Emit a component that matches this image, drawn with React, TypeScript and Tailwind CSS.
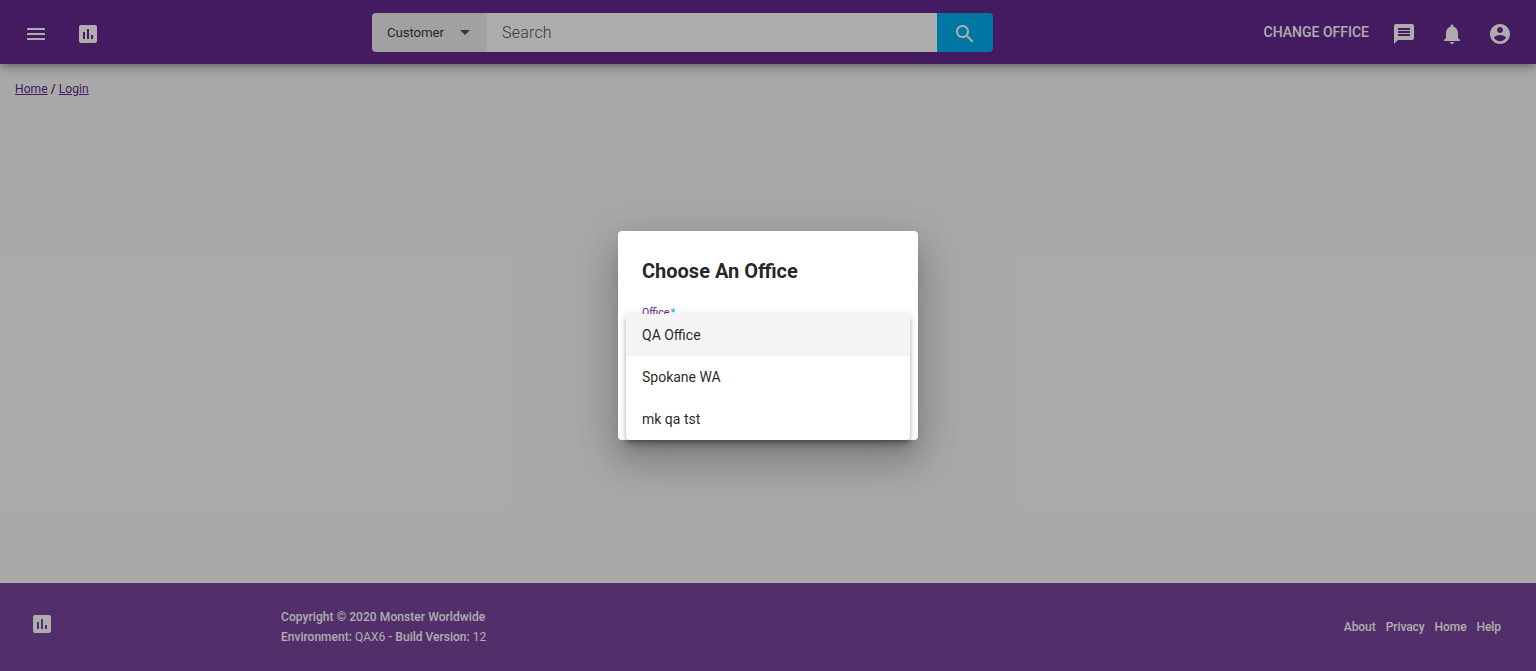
import React from 'react';

const icons = {
  menu: 'M3 18h18v-2H3v2zm0-5h18v-2H3v2zm0-7v2h18V6H3z',
  chart:
    'M19 3H5c-1.1 0-2 .9-2 2v14c0 1.1.9 2 2 2h14c1.1 0 2-.9 2-2V5c0-1.1-.9-2-2-2zM9 17H7v-7h2v7zm4 0h-2V7h2v10zm4 0h-2v-4h2v4z',
  search:
    'M15.5 14h-.79l-.28-.27C15.41 12.59 16 11.11 16 9.5 16 5.91 13.09 3 9.5 3S3 5.91 3 9.5 5.91 16 9.5 16c1.61 0 3.09-.59 4.23-1.57l.27.28v.79l5 4.99L20.49 19l-4.99-5zm-6 0C7.01 14 5 11.99 5 9.5S7.01 5 9.5 5 14 7.01 14 9.5 11.99 14 9.5 14z',
  message:
    'M20 2H4c-1.1 0-1.99.9-1.99 2L2 22l4-4h14c1.1 0 2-.9 2-2V4c0-1.1-.9-2-2-2zm-2 12H6v-2h12v2zm0-3H6V9h12v2zm0-3H6V6h12v2z',
  bell: 'M12 22c1.1 0 2-.9 2-2h-4c0 1.1.89 2 2 2zm6-6v-5c0-3.07-1.64-5.64-4.5-6.32V4c0-.83-.67-1.5-1.5-1.5s-1.5.67-1.5 1.5v.68C7.63 5.36 6 7.92 6 11v5l-2 2v1h16v-1l-2-2z',
  account:
    'M12 2C6.48 2 2 6.48 2 12s4.48 10 10 10 10-4.48 10-10S17.52 2 12 2zm0 3c1.66 0 3 1.34 3 3s-1.34 3-3 3-3-1.34-3-3 1.34-3 3-3zm0 14.2c-2.5 0-4.71-1.28-6-3.22.03-1.99 4-3.08 6-3.08 1.99 0 5.97 1.09 6 3.08-1.29 1.94-3.5 3.22-6 3.22z',
};

function Icon({ name, className = '' }: { name: keyof typeof icons; className?: string }) {
  return (
    <svg viewBox="0 0 24 24" className={`size-6 shrink-0 fill-current ${className}`} aria-hidden="true">
      <path d={icons[name]} />
    </svg>
  );
}

function Header() {
  return (
    <header className="grid h-16 shrink-0 grid-cols-[372px_621px_1fr] items-center bg-[#65288f] text-white shadow-[0_3px_5px_-1px_rgba(0,0,0,0.2),0_6px_10px_0_rgba(0,0,0,0.14),0_1px_18px_0_rgba(0,0,0,0.12)]">
      <div className="flex items-center gap-7 pt-1 pl-6">
        <Icon name="menu" />
        <Icon name="chart" />
      </div>
      <div className="mt-px flex h-[39px] overflow-hidden rounded">
        <div className="flex w-[115px] items-center justify-between bg-[#eeeeee] pr-4 pl-[15px] text-[13.33px] tracking-[-0.15px] text-black/80">
          <span>Customer</span>
          <svg viewBox="0 0 10 5" className="mr-px h-[5px] w-[10px] fill-black/65">
            <path d="M0 0h10L5 5z" />
          </svg>
        </div>
        <div className="flex flex-1 items-center bg-white pl-[15px] text-base font-light tracking-[0.2px] text-[#555]">
          Search
        </div>
        <button className="flex w-14 items-center justify-center bg-[#00afef]">
          <Icon name="search" className="mt-0.5" />
        </button>
      </div>
      <div className="flex items-center justify-end gap-6 pt-1 pr-6">
        <span className="-mt-1 -mr-px text-sm font-medium">CHANGE OFFICE</span>
        <Icon name="message" />
        <Icon name="bell" />
        <Icon name="account" />
      </div>
    </header>
  );
}

function Footer() {
  return (
    <footer className="flex h-[88px] shrink-0 items-center bg-[#7a459d] text-xs font-medium text-white">
      <div className="w-[281px] pb-1.5 pl-[30px]">
        <Icon name="chart" />
      </div>
      <div className="flex-1 leading-5">
        <p className="tracking-[0.07px]">Copyright © 2020 Monster Worldwide</p>
        <p className="tracking-[0.01px]">
          Environment: <span className="font-normal">QAX6</span> - Build Version: <span className="font-normal">12</span>
        </p>
      </div>
      <nav className="flex gap-2.5 pr-[35px] tracking-[-0.07px]">
        <a>About</a>
        <a>Privacy</a>
        <a>Home</a>
        <a>Help</a>
      </nav>
    </footer>
  );
}

const offices = ['QA Office', 'Spokane WA', 'mk qa tst'];

function OfficeDialog() {
  return (
    <div className="absolute inset-0 flex items-center justify-center bg-black/32">
      <section className="relative h-[209px] w-[300px] rounded bg-white px-6 pt-6 shadow-[0_11px_15px_-7px_rgba(0,0,0,0.2),0_24px_38px_3px_rgba(0,0,0,0.14),0_9px_46px_8px_rgba(0,0,0,0.12)]">
        <h2 className="text-xl leading-8 font-bold text-black/87">Choose An Office</h2>
        <label className="mt-[18px] block text-[10.5px] leading-4 text-[#65288f]">
          Office <span className="-ml-px text-[#00afef]">*</span>
        </label>
        <ul className="absolute top-[83px] left-2 w-[284px] overflow-hidden rounded bg-white text-sm text-black/87 shadow-[0_2px_4px_-1px_rgba(0,0,0,0.2),0_4px_5px_0_rgba(0,0,0,0.14),0_1px_10px_0_rgba(0,0,0,0.12)]">
          {offices.map((office, i) => (
            <li key={office} className={`flex h-[42px] items-center px-4 ${i === 0 ? 'bg-[#f4f4f4]' : ''}`}>
              {office}
            </li>
          ))}
        </ul>
      </section>
    </div>
  );
}

export default function App() {
  return (
    <div className="relative flex h-[671px] w-full flex-col overflow-hidden bg-[#fafafa] font-['Roboto',sans-serif]">
      <Header />
      <main className="flex-1 px-[15px] pt-4 text-xs leading-[18px] tracking-[0.08px] text-black">
        <a className="text-[#65288f] underline">Home</a> / <a className="text-[#65288f] underline">Login</a>
      </main>
      <Footer />
      <OfficeDialog />
    </div>
  );
}
